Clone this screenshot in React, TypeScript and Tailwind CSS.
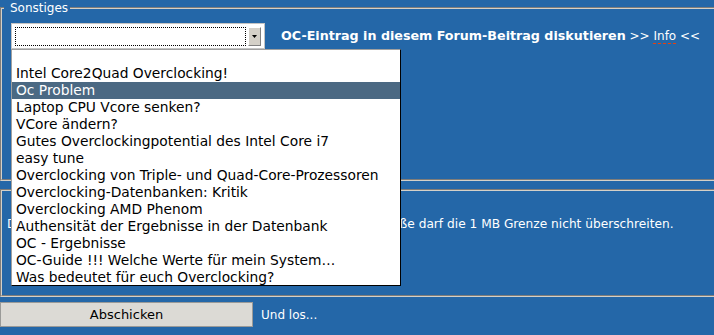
import React from "react";

const items = [
  "Intel Core2Quad Overclocking!",
  "Oc Problem",
  "Laptop CPU Vcore senken?",
  "VCore ändern?",
  "Gutes Overclockingpotential des Intel Core i7",
  "easy tune",
  "Overclocking von Triple- und Quad-Core-Prozessoren",
  "Overclocking-Datenbanken: Kritik",
  "Overclocking AMD Phenom",
  "Authensität der Ergebnisse in der Datenbank",
  "OC - Ergebnisse",
  "OC-Guide !!! Welche Werte für mein System…",
  "Was bedeutet für euch Overclocking?",
];

export default function App() {
  return (
    <div className="relative w-[714px] h-[335px] overflow-hidden bg-[#2467a8] font-['DejaVu_Sans',Verdana,sans-serif] text-[12px] text-white">
      <fieldset className="w-[720px] h-[181px] border-2 [border-style:groove] border-[#d4d0c8] pl-[9px]">
        <legend className="-ml-[7px] pl-[6px] pr-[2px] leading-[16px] text-[12px] text-white">Sonstiges</legend>
        <div className="flex items-center gap-[16px] pt-[7px]">
          <div className="relative w-[254px] h-[26px] bg-white border border-[#c4c4c4]">
            <div className="absolute left-[3px] top-[3px] w-[231px] h-[19px] border border-dotted border-black" />
            <div className="absolute left-[236px] top-[3px] w-[13px] h-[19px] bg-[#d4d0c8] border border-t-white border-l-white border-r-[#808080] border-b-[#808080] flex items-center justify-center">
              <svg width="5" height="3" viewBox="0 0 5 3">
                <path d="M0 0 H5 L2.5 3 Z" fill="#000" />
              </svg>
            </div>
          </div>
          <div className="leading-[14px] whitespace-nowrap">
            <span className="font-bold text-[12.7px]">OC-Eintrag in diesem Forum-Beitrag diskutieren</span>
            {" >> "}
            <abbr className="no-underline border-b border-dashed border-[#e8400c]">Info</abbr>
            {" <<"}
          </div>
        </div>
      </fieldset>

      <fieldset className="mt-[8px] w-[720px] h-[108px] border-2 [border-style:groove] border-[#d4d0c8] pl-[5px] pt-[23px]">
        <div className="flex items-center gap-[4px] leading-[16px] whitespace-nowrap text-[12.2px]">
          <span className="w-[42px]">Datei:</span>
          <span className="w-[266px] h-[20px] bg-white border border-[#a9a9a9]" />
          <span>Die Dateigröße darf die 1 MB Grenze nicht überschreiten.</span>
        </div>
      </fieldset>

      <div className="flex items-center gap-[8px] mt-[5px]">
        <button className="w-[253px] h-[25px] bg-[#dcdad5] border border-[#9a9a98] text-black text-[13px]">
          Abschicken
        </button>
        <span className="text-[12px]">Und los...</span>
      </div>

      <div className="absolute left-[11px] top-[49px] w-[390px] h-[237px] bg-white border border-t-[#a0a0a0] border-l-[#a0a0a0] border-r-black border-b-black overflow-hidden text-[13.8px] text-black">
        <div className="h-[15px]" />
        {items.map((t) => (
          <div
            key={t}
            className={
              t === "Oc Problem"
                ? "h-[17px] leading-[17px] pl-[4px] bg-[#4b6983] text-white whitespace-nowrap"
                : "h-[17px] leading-[17px] pl-[4px] whitespace-nowrap"
            }
          >
            {t}
          </div>
        ))}
      </div>
    </div>
  );
}
